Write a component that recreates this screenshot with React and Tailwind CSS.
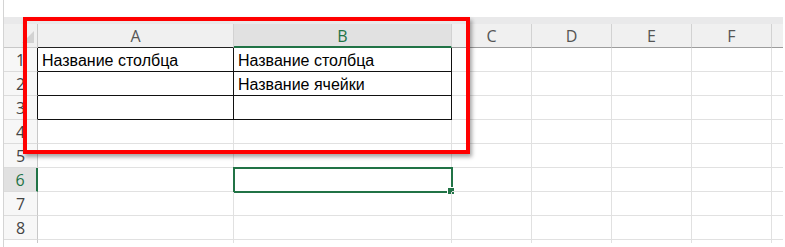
import React from 'react'

const cols = [
  { key: 'A', w: 'w-[196px]' },
  { key: 'B', w: 'w-[218px]' },
  { key: 'C', w: 'w-[80px]' },
  { key: 'D', w: 'w-[80px]' },
  { key: 'E', w: 'w-[80px]' },
  { key: 'F', w: 'w-[80px]' },
  { key: '', w: 'w-[11px]' },
]

const data = {
  '1A': 'Название столбца',
  '1B': 'Название столбца',
  '2B': 'Название ячейки',
}

const rows = [1, 2, 3, 4, 5, 6, 7, 8]

const headFont = { fontFamily: '"Open Sans", "Noto Sans", sans-serif' }
const cellFont = { fontFamily: '"Liberation Sans", Arial, sans-serif' }

const App = () => {
  return (
    <div className="relative w-[785px] h-[247px] bg-white overflow-hidden">
      <div className="ml-[3px] h-[247px] border-l border-[#d4d4d4] pt-[17px]">
        {/* thin strip over the headers */}
        <div className="h-[7px] w-[779px] bg-[#e9e9ea]" />

        {/* column headers */}
        <div className="flex h-[24px]" style={headFont}>
          <div className="relative w-[34px] h-full bg-[#f0f0f0] border-r border-b border-[#c8c8c8]">
            <div className="absolute right-[3px] bottom-[4px] w-0 h-0 border-l-[12px] border-l-transparent border-b-[12px] border-b-[#d2d2d2]" />
          </div>
          {cols.map((c) => {
            const sel = c.key === 'B'
            const bottom = sel
              ? 'border-b-2 border-b-[#217346] bg-[#e1e1e1] text-[#217346]'
              : c.key === 'A'
                ? 'border-b border-b-[#222] bg-[#f0f0f0] text-[#555]'
                : 'border-b border-b-[#9c9c9c] bg-[#f0f0f0] text-[#555]'
            const right = c.key === '' ? '' : 'border-r border-r-[#d2d2d2]'
            return (
              <div
                key={c.key || 'x'}
                className={`${c.w} h-full flex items-center justify-center pt-[1px] text-[16px] leading-none ${right} ${bottom}`}
              >
                {c.key}
              </div>
            )
          })}
        </div>

        {/* rows */}
        {rows.map((r) => {
          const inTable = r <= 3
          const selRow = r === 6
          return (
            <div key={r} className="flex h-[24px]">
              <div
                style={headFont}
                className={`w-[34px] h-full flex items-center justify-center pt-[1px] text-[16px] leading-none border-b border-b-[#dcdcdc] ${
                  selRow
                    ? 'bg-[#e1e1e1] text-[#217346] border-r-2 border-r-[#217346]'
                    : inTable
                      ? 'bg-[#f7f7f7] text-[#444] border-r border-r-[#111]'
                      : 'bg-[#f7f7f7] text-[#444] border-r border-r-[#c8c8c8]'
                }`}
              >
                {r}
              </div>
              {cols.map((c) => {
                const black = inTable && (c.key === 'A' || c.key === 'B')
                const text = data[`${r}${c.key}`]
                const right = c.key === '' ? '' : black ? 'border-r border-r-[#111]' : 'border-r border-r-[#e1e1e1]'
                const bottom = black ? 'border-b border-b-[#111]' : 'border-b border-b-[#e1e1e1]'
                const selCell = selRow && c.key === 'B'
                return (
                  <div
                    key={c.key || 'x'}
                    style={cellFont}
                    className={`relative ${c.w} h-full pl-[4px] pt-[1px] text-[16px] leading-[23px] text-black whitespace-nowrap ${right} ${bottom}`}
                  >
                    {text}
                    {selCell && (
                      <>
                        <div className="absolute left-[-1px] top-[-1px] w-[220px] h-[26px] border-2 border-[#217346]" />
                        <div className="absolute right-[-3px] bottom-[-3px] w-[6px] h-[6px] bg-[#217346] outline outline-1 outline-white" />
                      </>
                    )}
                  </div>
                )
              })}
            </div>
          )
        })}

        {/* stub below last row */}
        <div className="flex h-[3px]">
          <div className="w-[34px] h-full border-r border-r-[#c8c8c8]" />
          {cols.map((c) => (
            <div key={c.key || 'x'} className={`${c.w} h-full ${c.key ? 'border-r border-r-[#e1e1e1]' : ''}`} />
          ))}
        </div>
      </div>

      {/* red annotation frame */}
      <div className="absolute left-[23px] top-[17px] w-[447px] h-[137px] border-4 border-[#ff0000] shadow-[2px_3px_4px_rgba(0,0,0,0.35)]" />
    </div>
  )
}

export default App
